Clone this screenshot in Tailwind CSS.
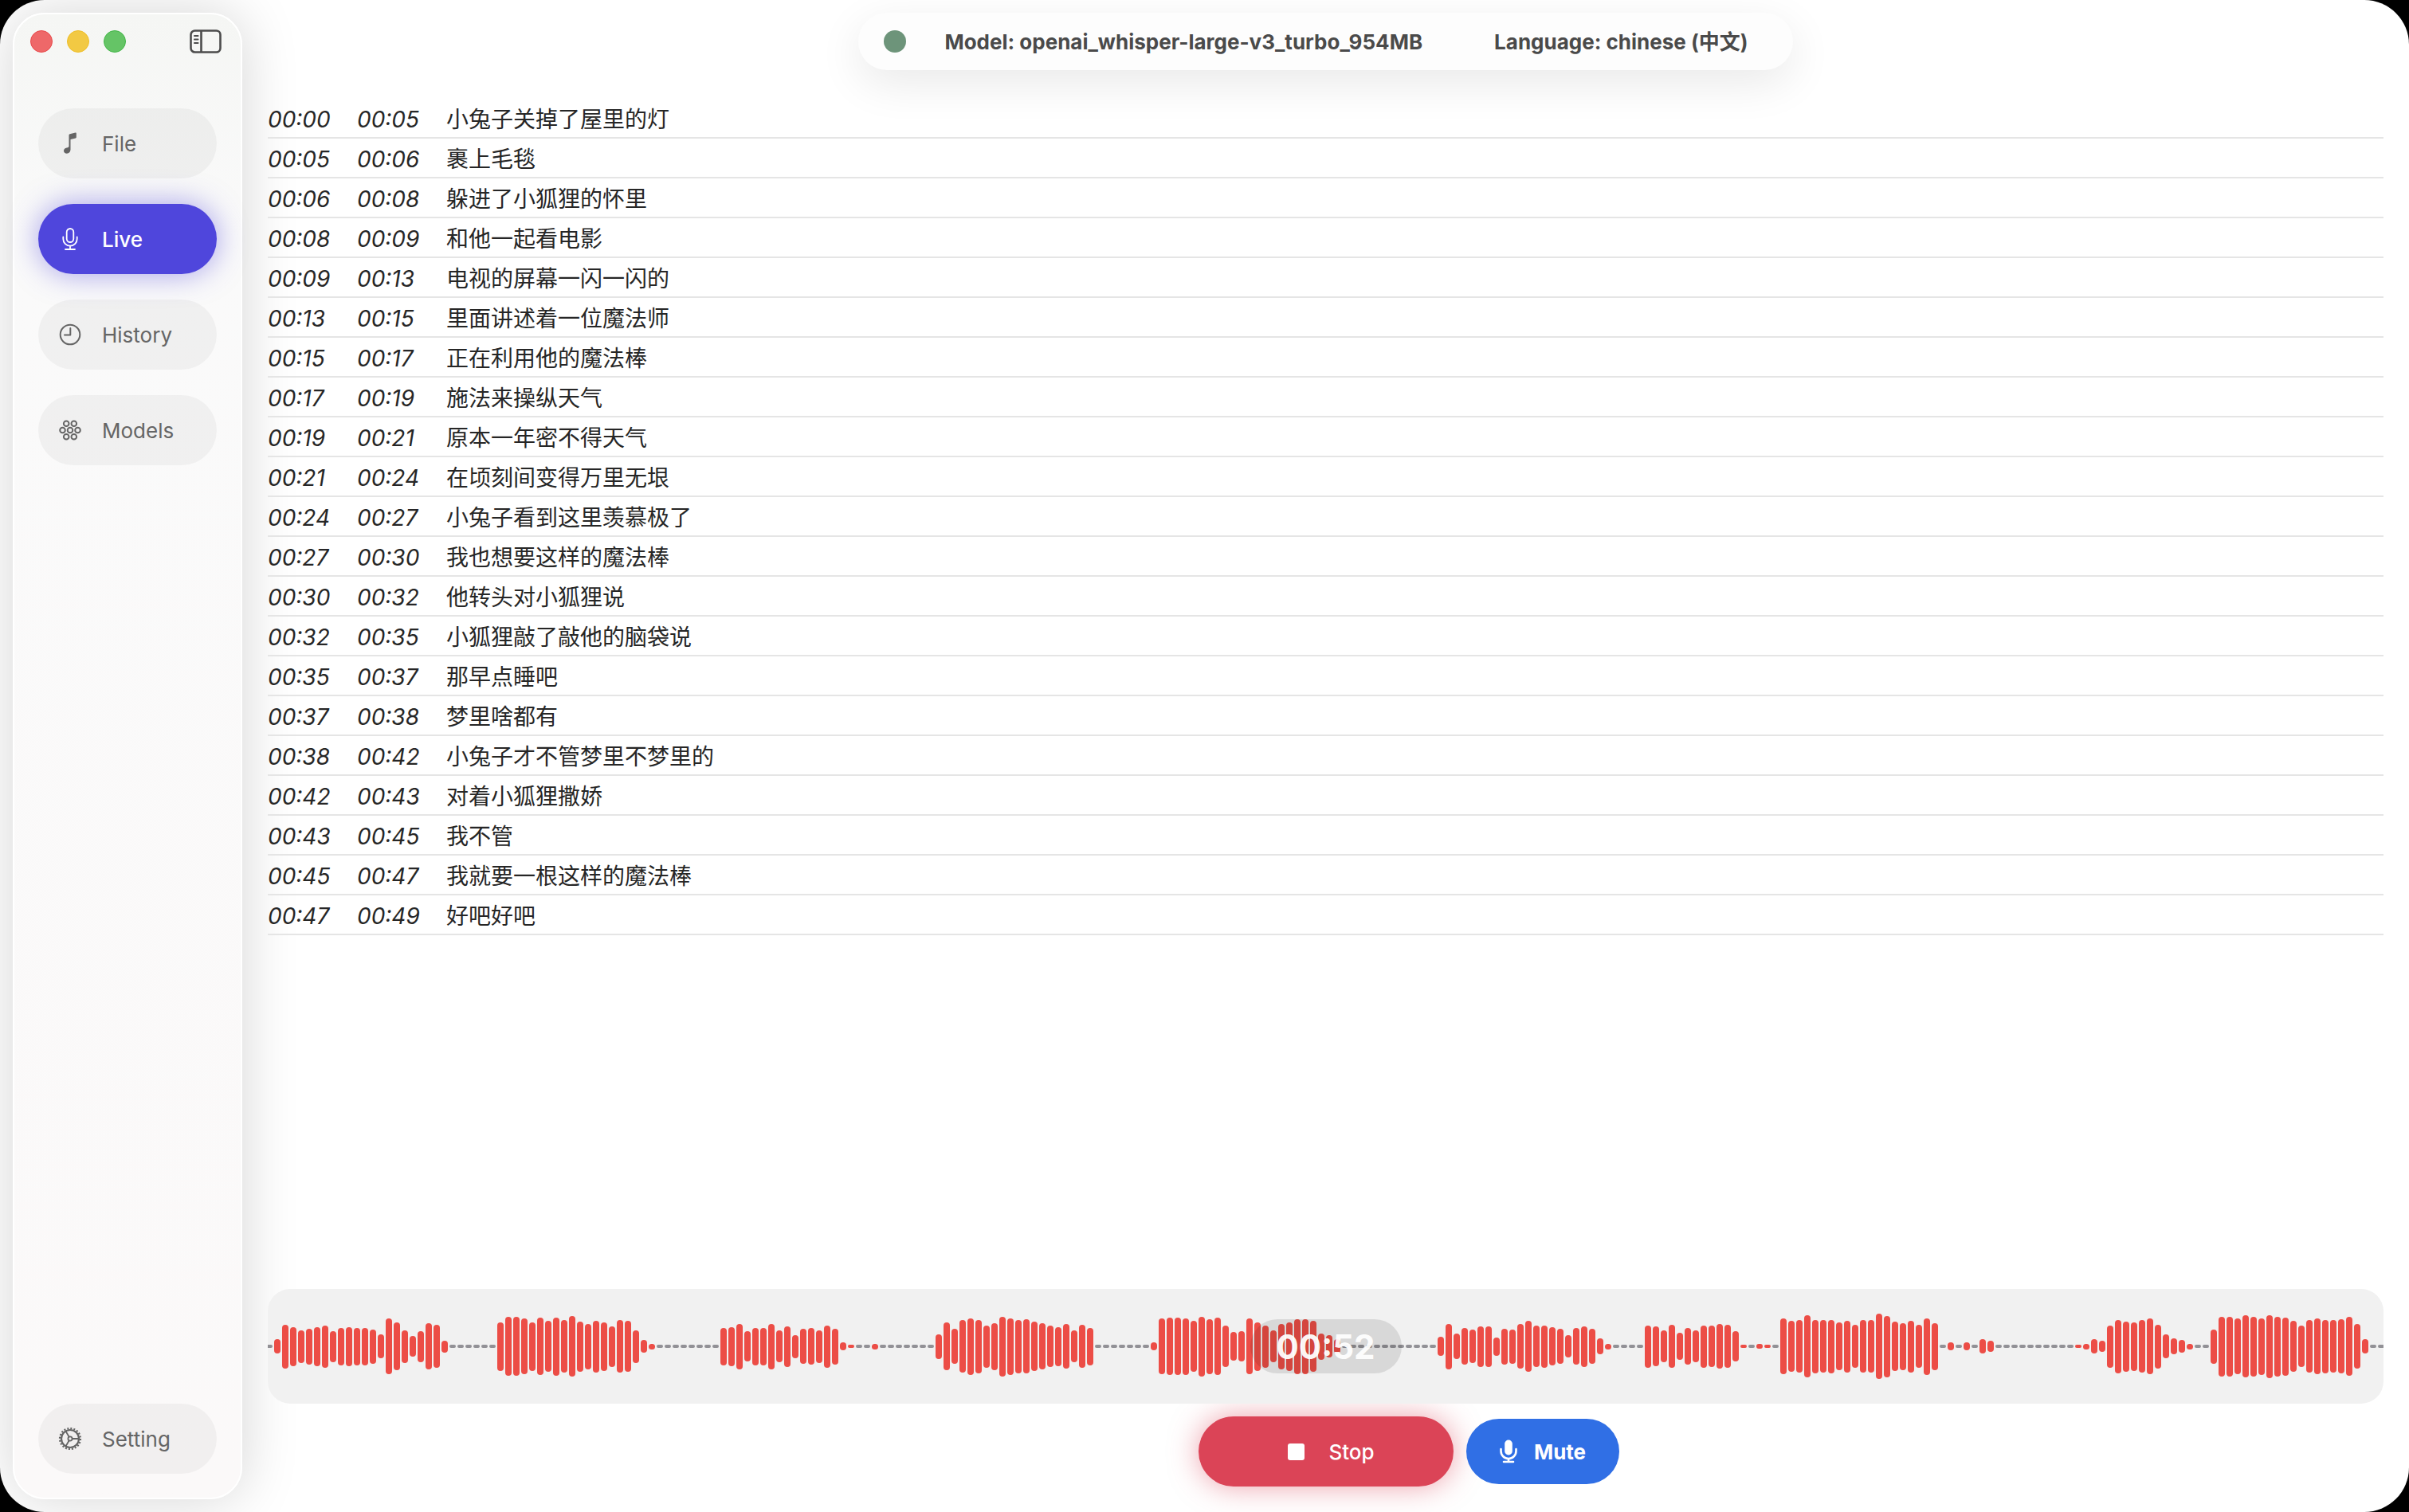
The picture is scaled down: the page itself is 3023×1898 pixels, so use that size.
<!DOCTYPE html>
<html lang="en">
<head>
<meta charset="utf-8">
<meta name="viewport" content="width=device-width, initial-scale=1">
<title>Live transcription</title>
<script src="https://cdn.jsdelivr.net/npm/@tailwindcss/browser@4"></script>
</head>
<body class="bg-black font-['Inter','Noto_Sans_CJK_SC',sans-serif]">
<div class="relative flex min-h-screen overflow-hidden rounded-[56px] bg-white p-4">

  <aside class="flex w-72 shrink-0 flex-col rounded-[40px] border-2 border-white bg-linear-to-b from-[#f5f6f4] via-[#fafafa] via-15% to-[#fbf9f9] px-[30px] pt-[18px] pb-[30px] shadow-[0_0_70px_rgba(0,0,0,0.17)]">
    <div class="-mx-3 flex h-8 items-center justify-between pl-[2px]">
      <div class="flex gap-[18px]">
        <button aria-label="Close" class="size-7 rounded-full border border-[#e8494b] bg-[#ee6869]"></button>
        <button aria-label="Minimize" class="size-7 rounded-full border border-[#eebd27] bg-[#f2c943]"></button>
        <button aria-label="Zoom" class="size-7 rounded-full border border-[#43b648] bg-[#65c466]"></button>
      </div>
      <button aria-label="Toggle sidebar" class="mr-1.5 text-[#4c4c4c]">
        <svg width="40" height="30" viewBox="0 0 40 30" fill="none" stroke="currentColor" stroke-width="2.6">
          <rect x="1.5" y="1.5" width="37" height="27" rx="5"/>
          <path d="M14.5 2v26"/><path d="M6 8h4.500M6 12.500h4.500M6 17h4.500" stroke-width="2" stroke-linecap="round"/>
        </svg>
      </button>
    </div>

    <nav class="mt-[68px] flex flex-1 flex-col gap-8 text-[26px] text-[#656565]">
      <button class="flex h-[88px] items-center gap-[25px] rounded-full bg-black/4 pl-[25px]">
        <svg width="30" height="30" viewBox="0 0 30 30" fill="currentColor"><path d="M13.500 4.600Q13.500 3.500 14.600 3.200L21.600 1.600Q22.800 1.400 22.800 2.500V7.200Q22.800 8.200 21.800 8.500L15.500 10V22.500c0 3-2 5.200-4.600 5.200-2.200 0-3.900-1.400-3.900-3.500 0-2.100 1.500-3.400 3.700-3.800 2-.4 2.800-.8 2.800-2.200z"/></svg>
        File
      </button>
      <button class="flex h-[88px] items-center gap-[25px] rounded-full bg-[#4f46dc] pl-[25px] font-medium text-white shadow-[0_0_36px_rgba(79,70,220,0.5)]">
        <svg width="30" height="30" viewBox="0 0 30 30" fill="none" stroke="currentColor" stroke-width="1.800" stroke-linecap="round"><rect x="10.700" y="2" width="8.600" height="17" rx="4.300"/><path d="M6.300 12.500v2.500a8.700 8.700 0 0 0 17.400 0v-2.500M15 23.700v4M9 28h12"/></svg>
        Live
      </button>
      <button class="flex h-[88px] items-center gap-[25px] rounded-full bg-black/4 pl-[25px]">
        <svg width="30" height="30" viewBox="0 0 30 30" fill="none" stroke="currentColor" stroke-width="2" stroke-linecap="round"><circle cx="15" cy="15" r="12.300"/><path d="M15.300 7v8.500H8" stroke-linejoin="round"/></svg>
        History
      </button>
      <button class="flex h-[88px] items-center gap-[25px] rounded-full bg-black/4 pl-[25px]">
        <svg width="30" height="30" viewBox="0 0 30 30" fill="none" stroke="currentColor" stroke-width="2"><circle cx="15" cy="15" r="3.300"/><circle cx="5.500" cy="15" r="3.300"/><circle cx="24.500" cy="15" r="3.300"/><circle cx="10.200" cy="6.700" r="3.300"/><circle cx="19.800" cy="6.700" r="3.300"/><circle cx="10.200" cy="23.300" r="3.300"/><circle cx="19.800" cy="23.300" r="3.300"/></svg>
        Models
      </button>
      <button class="mt-auto flex h-[88px] items-center gap-[25px] rounded-full bg-black/4 pl-[25px]">
        <svg width="30" height="30" viewBox="0 0 30 30" fill="none" stroke="currentColor"><circle cx="15" cy="15" r="13" stroke-width="2.200" stroke-dasharray="2.040 2.040"/><circle cx="15" cy="15" r="11" stroke-width="2.200"/><circle cx="15" cy="15" r="2.600" stroke-width="1.800"/><path d="M17.600 15H26M13.700 12.700 9.500 5.500M13.700 17.300 9.500 24.500" stroke-width="1.800"/></svg>
        Setting
      </button>
    </nav>
  </aside>

  <main class="flex min-w-0 flex-1 flex-col pr-4 pb-4 pl-8">
    <header class="flex h-[72px] items-center self-center rounded-full bg-[#fdfdfd] pr-14 pl-8 text-[26px] font-bold text-[#4a4a4a] shadow-[0_16px_56px_rgba(0,0,0,0.09)]">
      <span class="size-7 rounded-full bg-[#6d947a]"></span>
      <span class="ml-12">Model: openai_whisper-large-v3_turbo_954MB</span>
      <span class="ml-[90px]">Language: chinese (中文)</span>
    </header>

    <table class="mt-9 w-full table-fixed border-separate border-spacing-0 text-left text-[28px] leading-[44px] text-[#262626]">
      <colgroup><col class="w-28"><col class="w-28"><col></colgroup>
      <tbody id="lines"></tbody>
    </table>

    <section class="relative mt-auto flex h-36 items-center overflow-hidden rounded-[28px] bg-[#f1f1f1]" aria-label="Waveform">
      <div id="wave" class="-ml-0.5 flex items-center gap-0.5"></div>
      <div class="absolute inset-0 m-auto flex h-[68px] w-[190px] items-center justify-center rounded-full bg-black/10 text-[42px] font-bold text-white/95">00:52</div>
    </section>

    <footer class="mt-4 grid grid-cols-[1fr_320px_1fr] items-center gap-4 text-[26px] text-white">
      <button class="col-start-2 flex h-[88px] items-center justify-center gap-[30px] rounded-full bg-[#db4457] pl-3.5 font-medium shadow-[0_0_36px_rgba(219,68,87,0.5)]">
        <span class="size-[21px] rounded-[3px] bg-white"></span>Stop
      </button>
      <button class="flex h-[82px] w-48 items-center justify-center gap-5 rounded-full bg-[#306fe5] font-bold">
        <svg width="24" height="30" viewBox="0 0 24 30" fill="none" stroke="currentColor" stroke-width="2.600" stroke-linecap="round"><rect x="7.200" y=".5" width="9.600" height="19" rx="4.800" fill="currentColor" stroke="none"/><path d="M2.500 12v2.500a9.500 9.500 0 0 0 19 0V12M12 24v3.500M6 28h12"/></svg>
        Mute
      </button>
    </footer>
  </main>
</div>

<script>
const lines = [
  ["00:00","00:05","小兔子关掉了屋里的灯"],["00:05","00:06","裹上毛毯"],["00:06","00:08","躲进了小狐狸的怀里"],
  ["00:08","00:09","和他一起看电影"],["00:09","00:13","电视的屏幕一闪一闪的"],["00:13","00:15","里面讲述着一位魔法师"],
  ["00:15","00:17","正在利用他的魔法棒"],["00:17","00:19","施法来操纵天气"],["00:19","00:21","原本一年密不得天气"],
  ["00:21","00:24","在顷刻间变得万里无垠"],["00:24","00:27","小兔子看到这里羡慕极了"],["00:27","00:30","我也想要这样的魔法棒"],
  ["00:30","00:32","他转头对小狐狸说"],["00:32","00:35","小狐狸敲了敲他的脑袋说"],["00:35","00:37","那早点睡吧"],
  ["00:37","00:38","梦里啥都有"],["00:38","00:42","小兔子才不管梦里不梦里的"],["00:42","00:43","对着小狐狸撒娇"],
  ["00:43","00:45","我不管"],["00:45","00:47","我就要一根这样的魔法棒"],["00:47","00:49","好吧好吧"]
];
document.getElementById("lines").innerHTML = lines.map(([a, b, t]) =>
  `<tr><td class="border-b-2 border-[#e5e5e5] pt-1 italic">${a}</td><td class="border-b-2 border-[#e5e5e5] pt-1 italic">${b}</td><td lang="zh-CN" class="border-b-2 border-[#e5e5e5] pt-1 whitespace-nowrap">${t}</td></tr>`).join("");

// Bar heights in pixels; 0 is silence.
const levels = [0,
  18,55,49,41,45,49,53,39,47,49,47,47,43,30,70,60,41,26,39,58,54,15,0,0,0,0,0,0,
  61,74,74,70,61,72,64,73,66,76,63,57,65,61,51,66,64,41,16,7,0,0,0,0,0,0,0,0,
  47,49,57,38,47,47,57,40,51,29,44,46,41,53,45,10,4,0,0,7,0,0,0,0,0,0,0,
  31,60,44,66,71,67,53,59,75,71,67,68,62,58,52,49,56,40,54,47,0,0,0,0,0,0,0,
  10,70,72,72,71,64,75,69,72,52,36,38,70,61,53,40,57,61,69,69,64,33,28,18,
  0,0,0,0,0,0,0,0,0,0,0,0,
  24,57,32,46,42,51,51,23,45,43,56,64,52,53,48,44,28,46,51,44,20,7,0,0,0,0,
  53,50,40,54,34,46,40,53,52,56,54,38,4,0,6,4,0,
  70,64,66,78,67,66,67,60,65,54,66,66,82,77,62,59,65,54,71,59,0,10,0,10,0,18,14,
  0,0,0,0,0,0,0,0,0,0,
  4,7,18,14,53,67,63,61,66,70,55,30,20,16,7,0,0,
  43,75,75,70,78,75,71,79,75,73,64,52,66,70,67,66,68,74,56,18,0,0];
document.getElementById("wave").innerHTML = levels.map(h => h
  ? `<i class="w-2 shrink-0 rounded-full bg-[#ec4d46]" style="height:${h}px"></i>`
  : `<i class="h-1 w-2 shrink-0 rounded-full bg-[#929196]"></i>`).join("");
</script>
</body>
</html>
